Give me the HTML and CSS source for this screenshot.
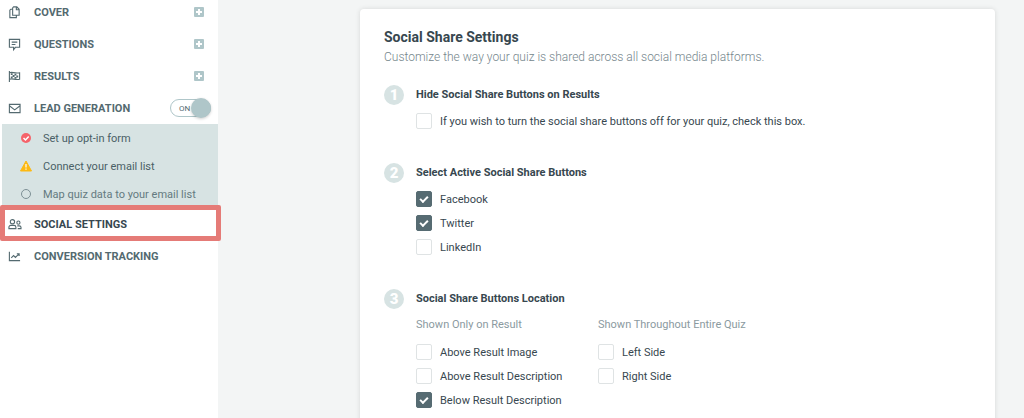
FILE: index.html
```
<!DOCTYPE html>
<html lang="en">
<head>
    <meta charset="UTF-8">
    <meta name="viewport" content="width=device-width, initial-scale=1.0">
    <title>Social Share Settings</title>
    <link rel="stylesheet" href="styles.css">
</head>
<body>
    <div class="app">
        <!-- Sidebar -->
        <nav class="sidebar">
            <div class="nav-row">
                <a href="#cover" class="nav-link">
                    <svg class="nav-icon" viewBox="0 0 14 14"><path d="M6 1h3.500L12 3.500V10H5V2zM9 1v3h3M5 3.500H3l-1 1v8h7V10"/></svg>
                    COVER
                </a>
                <button class="add-btn" aria-label="Add cover"></button>
            </div>
            <div class="nav-row">
                <a href="#questions" class="nav-link">
                    <svg class="nav-icon" viewBox="0 0 14 14"><path d="M1.500 1.500h11v8.500H8l-2 2.500V10H1.500zM4 4.500h6M4 7h4"/></svg>
                    QUESTIONS
                </a>
                <button class="add-btn" aria-label="Add question"></button>
            </div>
            <div class="nav-row">
                <a href="#results" class="nav-link">
                    <svg class="nav-icon" viewBox="0 0 14 14"><path d="M1.500 1v12M1.500 3c3-1.500 5 1 11 0v7c-5 1-8-1.500-11 0"/><path class="checkers" d="M3 4.500h2M7 5h2M5 6.500h2M9 7h2M3 8h2M7 8.500h2"/></svg>
                    RESULTS
                </a>
                <button class="add-btn" aria-label="Add result"></button>
            </div>
            <div class="nav-row">
                <a href="#leads" class="nav-link">
                    <svg class="nav-icon" viewBox="0 0 14 14"><path d="M1.500 2.500h11.500v9h-11.500zM1.500 4l5.700 4.500L13 4"/></svg>
                    LEAD GENERATION
                </a>
                <label class="toggle">
                    <input type="checkbox" aria-label="Lead generation" checked>
                    <span class="toggle-text">ON</span>
                </label>
            </div>
            <div class="subnav">
                <a href="#form" class="sub-link">
                    <svg class="sub-icon" viewBox="0 0 14 14"><circle cx="7" cy="7" r="5" fill="#f5636a"/><path d="M4.500 7l2 2 3.200-3.500" fill="none" stroke="#fff" stroke-width="1.500"/></svg>
                    Set up opt-in form
                </a>
                <a href="#connect" class="sub-link">
                    <svg class="sub-icon" viewBox="0 0 14 14"><path d="M7 2l5.500 10h-11z" fill="#fdb913" stroke="#fdb913" stroke-linejoin="round"/><path d="M7 5v3.500M7 9.500v1.200" stroke="#fff" stroke-width="1.200"/></svg>
                    Connect your email list
                </a>
                <a href="#map" class="sub-link muted">
                    <svg class="sub-icon" viewBox="0 0 14 14"><circle cx="7" cy="7" r="4.500" fill="none" stroke="#7d9095"/></svg>
                    Map quiz data to your email list
                </a>
            </div>
            <div class="nav-row active">
                <a href="#social" class="nav-link">
                    <svg class="nav-icon" viewBox="0 0 14 14"><circle cx="4.800" cy="4" r="2.300"/><path d="M1 11.500V10c0-1.500 1-2 2-2h3.500c1 0 2 .5 2 2v1.500z"/><circle cx="11.200" cy="5" r="1.700"/><path d="M10 8.500h2c1.200 0 2 .5 2 1.500v1.500h-3.500"/></svg>
                    SOCIAL SETTINGS
                </a>
            </div>
            <div class="nav-row">
                <a href="#tracking" class="nav-link">
                    <svg class="nav-icon" viewBox="0 0 14 14"><path d="M1.500 2v9.500h11.500M3.500 8.500L6 6l2 2 3.500-3.500M9.500 4h2.500v2.500"/></svg>
                    CONVERSION TRACKING
                </a>
            </div>
        </nav>

        <!-- Settings -->
        <main class="main">
            <div class="card">
                <h1 class="title">Social Share Settings</h1>
                <p class="subtitle">Customize the way your quiz is shared across all social media platforms.</p>

                <section class="step">
                    <span class="badge">1</span>
                    <div class="step-body">
                        <h2 class="step-title">Hide Social Share Buttons on Results</h2>
                        <label class="check"><input type="checkbox">If you wish to turn the social share buttons off for your quiz, check this box.</label>
                    </div>
                </section>

                <section class="step">
                    <span class="badge">2</span>
                    <div class="step-body">
                        <h2 class="step-title">Select Active Social Share Buttons</h2>
                        <label class="check"><input type="checkbox" checked>Facebook</label>
                        <label class="check"><input type="checkbox" checked>Twitter</label>
                        <label class="check"><input type="checkbox">LinkedIn</label>
                    </div>
                </section>

                <section class="step">
                    <span class="badge">3</span>
                    <div class="step-body">
                        <h2 class="step-title">Social Share Buttons Location</h2>
                        <div class="columns">
                            <div>
                                <h3 class="column-title">Shown Only on Result</h3>
                                <label class="check"><input type="checkbox">Above Result Image</label>
                                <label class="check"><input type="checkbox">Above Result Description</label>
                                <label class="check"><input type="checkbox" checked>Below Result Description</label>
                            </div>
                            <div>
                                <h3 class="column-title">Shown Throughout Entire Quiz</h3>
                                <label class="check"><input type="checkbox">Left Side</label>
                                <label class="check"><input type="checkbox">Right Side</label>
                            </div>
                        </div>
                    </div>
                </section>
            </div>
        </main>
    </div>
</body>
</html>
```
FILE: styles.css
```
*,
*::before,
*::after {
    margin: 0;
    padding: 0;
    box-sizing: border-box;
}

body {
    font-family: Roboto, "Liberation Sans", sans-serif;
    font-size: 11px;
    color: #37474f;
    background: #f3f5f5;
}

a {
    color: inherit;
    text-decoration: none;
}

.app {
    display: flex;
    height: 100vh;
    overflow: hidden;
}

/* Sidebar */
.sidebar {
    flex: 0 0 218px;
    margin-top: -4px;
    background: #fff;
}

.nav-row {
    display: flex;
    align-items: center;
    justify-content: space-between;
    height: 32px;
    padding: 0 14px 0 8px;
    color: #546a70;
}

.nav-link {
    display: flex;
    align-items: center;
    gap: 13px;
    font-weight: 700;
}

.nav-icon {
    width: 13px;
    height: 13px;
    fill: none;
    stroke: #546a70;
    stroke-width: 1.2;
    overflow: visible;
}

.checkers {
    stroke-width: 2;
}

.add-btn {
    width: 10px;
    height: 10px;
    border: 0;
    border-radius: 1px;
    background:
        linear-gradient(#fff, #fff) center / 6px 2px no-repeat,
        linear-gradient(#fff, #fff) center / 2px 6px no-repeat,
        #afc6c9;
    cursor: pointer;
}

/* ON / OFF switch */
.toggle {
    position: relative;
    width: 41px;
    height: 18px;
    margin-right: -7px;
    padding-left: 8px;
    border: 1px solid #afc6c9;
    border-radius: 9px;
    line-height: 17px;
    font-size: 8px;
}

.toggle input {
    appearance: none;
    position: absolute;
    top: -2px;
    right: -1px;
    width: 20px;
    height: 20px;
    border-radius: 50%;
    background: #afc6c9;
    box-shadow: 0 1px 3px rgba(0, 0, 0, 0.2);
}

.toggle-text {
    display: block;
}

.subnav {
    margin-left: 2px;
    background: #d7e3e3;
}

.sub-link {
    display: flex;
    align-items: center;
    gap: 10px;
    height: 28px;
    padding-left: 17px;
    color: #4a5f66;
}

.sub-link.muted {
    color: #647a80;
}

.sub-icon {
    width: 14px;
    height: 14px;
}

.active {
    position: relative;
    color: #37474f;
}

/* frame round the current section, a little wider than the sidebar */
.active::after {
    content: "";
    position: absolute;
    inset: -3px -3px -1px 0;
    border: 5px solid #e57b77;
    border-radius: 2px;
    pointer-events: none;
}

/* Settings card */
.main {
    flex: 1;
    padding: 9px 29px 0 142px;
}

.card {
    min-height: 100%;
    padding: 16px 24px 32px;
    border-radius: 4px;
    background: #fff;
    box-shadow: 0 0 5px rgba(0, 0, 0, 0.12);
}

.title {
    font-size: 14px;
    line-height: 24px;
}

.subtitle {
    font-size: 12px;
    font-weight: 300;
    line-height: 16px;
    color: #75868c;
}

.step {
    display: flex;
    gap: 12px;
    margin-top: 20px;
}

.step + .step {
    margin-top: 30px;
}

.badge {
    width: 20px;
    height: 20px;
    border-radius: 50%;
    background: #d7e3e3;
    color: #fff;
    font-size: 15px;
    font-weight: 900;
    line-height: 20px;
    text-align: center;
}

.step-body {
    flex: 1;
}

.step-title {
    margin-bottom: 4px;
    font-size: 11px;
    line-height: 20px;
}

.check {
    display: flex;
    align-items: center;
    gap: 8px;
    height: 24px;
}

.check input {
    appearance: none;
    width: 16px;
    height: 16px;
    border: 1px solid #dfe3e4;
    border-radius: 2px;
    background: #fff;
}

.check input:checked {
    border-color: #566b72;
    background: #566b72;
}

.check input:checked::before {
    content: "";
    display: block;
    width: 8px;
    height: 5px;
    margin: 4px auto 0;
    border: solid #fff;
    border-width: 0 0 2px 2px;
    transform: rotate(-45deg);
}

.columns {
    display: grid;
    grid-template-columns: 182px 1fr;
    padding-top: 2px;
}

.column-title {
    margin-bottom: 5px;
    font-size: 11px;
    font-weight: 400;
    line-height: 20px;
    color: #8b9a9f;
}
```
